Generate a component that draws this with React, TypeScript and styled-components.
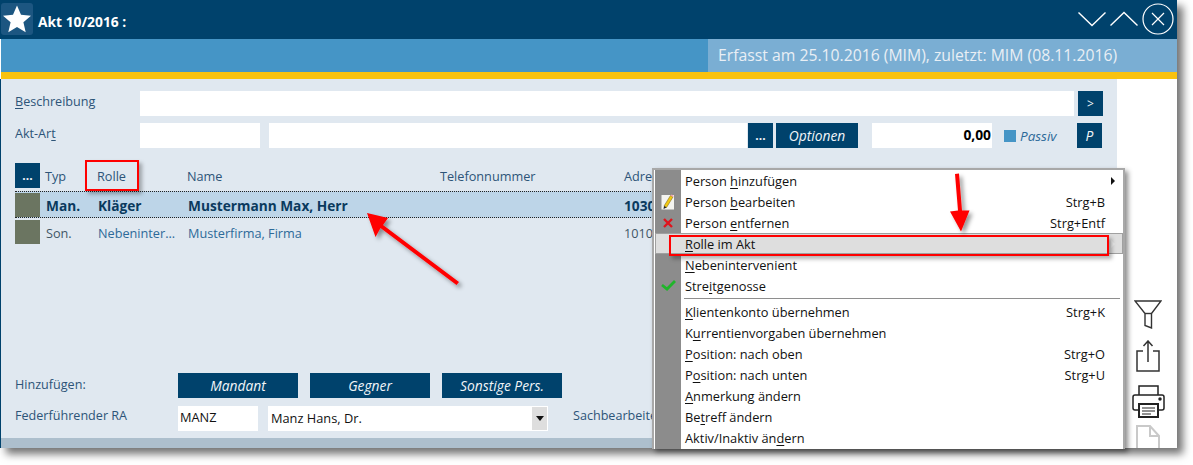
import React from "react";
import styled, { createGlobalStyle } from "styled-components";

const Global = createGlobalStyle`
  html, body { margin: 0; padding: 0; background: #fff; }
  body { font-family: "Open Sans", "Noto Sans", sans-serif; font-size: 13px; overflow: hidden; }
  u { text-underline-offset: 2px; text-decoration-thickness: 1px; }
`;

const Page = styled.div`
  position: relative;
  width: 1193px;
  height: 465px;
  overflow: hidden;
  background: #fff;
`;
const Win = styled.div`
  width: 1177px;
  height: 448px;
  display: flex;
  flex-direction: column;
  box-shadow: 6px 6px 8px rgba(0, 0, 0, 0.55);
  background: #fff;
`;
const TitleBar = styled.header`
  height: 39px;
  flex: none;
  background: #00426c;
  display: flex;
  align-items: center;
  padding: 0 3px 0 1px;
  color: #fff;
`;
const StarBox = styled.div`
  width: 32px;
  height: 32px;
  margin-top: -1px;
  border-radius: 3px;
  background: #1c5681;
  display: flex;
  align-items: center;
  justify-content: center;
`;
const Title = styled.div`
  margin-left: 5px;
  font-weight: 700;
  font-size: 13.8px;
  flex: 1;
  margin-top: 3px;
`;
const WinControls = styled.div`
  display: flex;
  align-items: center;
  gap: 4px;
  margin-top: -1px;
`;
const SubBar = styled.div`
  height: 33px;
  flex: none;
  background: #4595c6;
  margin-left: 1px;
  display: flex;
  justify-content: flex-end;
`;
const SubInfo = styled.div`
  width: 469px;
  box-sizing: border-box;
  padding: 0 0 0 10px;
  background: #7aaed3;
  color: #e9eff5;
  font-size: 15.75px;
  line-height: 33px;
  white-space: nowrap;
`;
const Stripe = styled.div`
  height: 7px;
  flex: none;
  margin-left: 1px;
  background: #f9c20f;
`;
const Body = styled.div`
  flex: 1;
  min-height: 0;
  display: flex;
`;
const Main = styled.main`
  width: 1117px;
  box-sizing: border-box;
  border-left: 1px solid #00426c;
  background: #e0e8f0;
  display: flex;
  flex-direction: column;
  overflow: hidden;
`;
const Side = styled.aside`
  flex: 1;
  position: relative;
  display: flex;
  flex-direction: column;
  align-items: center;
  padding: 221px 0 0 2px;
  overflow: hidden;
`;
const SideIcon = styled.div<{ $mt?: number }>`
  margin-top: ${(p) => p.$mt ?? 0}px;
  line-height: 0;
  flex: none;
`;
const Form = styled.section`
  padding: 12px 14px 0 14px;
  display: flex;
  flex-direction: column;
  gap: 7px;
`;
const FormRow = styled.div`
  display: flex;
  align-items: center;
  height: 25px;
`;
const Label = styled.label<{ $w?: number; $up?: number; $ml?: number }>`
  width: ${(p) => p.$w ?? 125}px;
  flex: none;
  color: #2d5478;
  font-size: 12.6px;
  margin-top: ${(p) => -(p.$up ?? 5)}px;
  margin-left: ${(p) => p.$ml ?? 0}px;
  white-space: nowrap;
  overflow: hidden;
`;
const Input = styled.div<{ $w?: number; $ml?: number; $right?: boolean }>`
  ${(p) => (p.$w ? `width:${p.$w}px; flex:none;` : "flex:1;")}
  margin-left: ${(p) => p.$ml ?? 0}px;
  height: 25px;
  box-sizing: border-box;
  background: #fff;
  padding: 0 1px 0 2px;
  line-height: 23px;
  font-size: 12.8px;
  color: #111;
  text-align: ${(p) => (p.$right ? "right" : "left")};
`;
const BoldVal = styled.b`
  font-size: 13.8px;
  color: #000;
`;
const Btn = styled.button<{ $w?: number; $ml?: number; $italic?: boolean }>`
  width: ${(p) => p.$w ?? 25}px;
  margin-left: ${(p) => p.$ml ?? 0}px;
  height: 25px;
  flex: none;
  border: 0;
  padding: 0;
  background: #00426c;
  color: #f1f5f8;
  font-family: inherit;
  font-size: ${(p) => (p.$italic ? 13.8 : 12)}px;
  font-style: ${(p) => (p.$italic ? "italic" : "normal")};
  line-height: 23px;
`;
const Swatch = styled.span`
  width: 12px;
  height: 12px;
  margin-left: 12px;
  background: #4595c6;
  flex: none;
`;
const PassivText = styled.span`
  width: 57px;
  margin-left: 4px;
  flex: none;
  color: #2d6a99;
  font-style: italic;
  font-size: 13.5px;
`;
const Table = styled.section`
  margin: 15px 14px 0 14px;
  display: flex;
  flex-direction: column;
`;
const HeadRow = styled.div`
  display: flex;
  align-items: center;
  height: 25px;
  color: #2d5478;
  font-size: 12.7px;
  margin-bottom: 3px;
`;
const DataRow = styled.div<{ $sel?: boolean }>`
  display: flex;
  align-items: center;
  height: ${(p) => (p.$sel ? 27 : 24)}px;
  box-sizing: border-box;
  margin-bottom: ${(p) => (p.$sel ? 2 : 0)}px;
  background: ${(p) => (p.$sel ? "#bdd5e8" : "transparent")};
  border-top: ${(p) => (p.$sel ? "1px dotted #222" : "0")};
  border-bottom: ${(p) => (p.$sel ? "1px dotted #222" : "0")};
  font-weight: ${(p) => (p.$sel ? 700 : 400)};
  font-size: ${(p) => (p.$sel ? 13.7 : 12.7)}px;
  color: ${(p) => (p.$sel ? "#0a3a5e" : "#2d6a99")};
`;
const Chip = styled.span`
  width: 25px;
  height: 24px;
  flex: none;
  background: #6b7561;
`;
const Cell = styled.span<{ $w: number; $dark?: boolean; $data?: boolean }>`
  width: ${(p) => p.$w}px;
  flex: none;
  font-size: inherit;
  white-space: nowrap;
  overflow: hidden;
  padding: ${(p) => (p.$data ? "1px 0 0 6px" : "1px 0 0 5px")};
  box-sizing: border-box;
  color: ${(p) => (p.$dark ? "#3f5666" : "inherit")};
`;
const Bottom = styled.section`
  margin-top: auto;
  padding: 0 14px;
  display: flex;
  flex-direction: column;
  gap: 8px;
`;
const Select = styled.div`
  width: 280px;
  height: 25px;
  margin-left: 10px;
  flex: none;
  background: #fff;
  display: flex;
  align-items: center;
  justify-content: space-between;
  padding-left: 3px;
  box-sizing: border-box;
  font-size: 12.8px;
  color: #111;
  line-height: 23px;
`;
const SelectArrow = styled.span`
  width: 15px;
  height: 23px;
  background: #dedede;
  margin-right: 1px;
  display: flex;
  align-items: center;
  justify-content: center;
  &::after {
    content: "";
    border-left: 4px solid transparent;
    border-right: 4px solid transparent;
    border-top: 5px solid #111;
  }
`;
const Footer = styled.div`
  height: 10px;
  margin-top: 7px;
  flex: none;
  background: #adbfcd;
`;
const Menu = styled.nav`
  position: absolute;
  left: 652px;
  top: 168px;
  width: 473px;
  height: 281px;
  box-sizing: border-box;
  background: #fff;
  border: 2px solid #a8a8a8;
  border-bottom: 0;
  padding-left: 1px;
  box-shadow: 3px 3px 5px rgba(0, 0, 0, 0.45);
  overflow: hidden;
`;
const MenuList = styled.div`
  display: flex;
  flex-direction: column;
  background: linear-gradient(to right, #8c8c8c 26px, #fff 26px);
  height: 100%;
`;
const Item = styled.div<{ $hover?: boolean }>`
  position: relative;
  height: 21px;
  flex: none;
  box-sizing: border-box;
  display: flex;
  align-items: center;
  font-size: 12.8px;
  color: #111;
  background: ${(p) => (p.$hover ? "#dedede" : "transparent")};
  outline: ${(p) => (p.$hover ? "1px solid #a0a0a0" : "0")};
  outline-offset: -1px;
  white-space: nowrap;
`;
const IconSlot = styled.span`
  width: 26px;
  flex: none;
  display: flex;
  align-items: center;
  justify-content: center;
`;
const ItemLabel = styled.span`
  flex: 1;
  margin-left: 4px;
`;
const Shortcut = styled.span`
  margin-right: 18px;
`;
const SubArrow = styled.span<{ $pale?: boolean }>`
  position: absolute;
  right: 8px;
  top: 7px;
  border-top: 4px solid transparent;
  border-bottom: 4px solid transparent;
  border-left: 4px solid ${(p) => (p.$pale ? "#eaeaea" : "#111")};
`;
const Sep = styled.div`
  height: 5px;
  flex: none;
  background: linear-gradient(#8e8e8e, #8e8e8e) 29px 2px / 436px 1px no-repeat;
`;
const Callout = styled.div<{ $x: number; $y: number; $w: number; $h: number }>`
  position: absolute;
  left: ${(p) => p.$x}px;
  top: ${(p) => p.$y}px;
  width: ${(p) => p.$w}px;
  height: ${(p) => p.$h}px;
  box-sizing: border-box;
  border: 2px solid #f00;
  box-shadow: 3px 3px 4px rgba(0, 0, 0, 0.3);
  pointer-events: none;
`;
const ArrowLayer = styled.svg`
  position: absolute;
  left: 0;
  top: 0;
  pointer-events: none;
`;

const Star = () => (
  <svg width="30" height="30" viewBox="0 0 30 30">
    <path d="M15 1.5l4 9.3 10 .9-7.6 6.6 2.3 9.9L15 22.9l-8.7 5.3 2.3-9.9L1 11.7l10-.9z" fill="#fff" />
  </svg>
);
const Chevron = ({ up }: { up?: boolean }) => (
  <svg width="28" height="16" viewBox="0 0 28 16" fill="none" stroke="#fff" strokeWidth="1.4">
    <path d={up ? "M0.5 14.5L14 1.5l13.5 13" : "M0.5 1.5L14 14.5 27.5 1.5"} />
  </svg>
);
const CloseIcon = () => (
  <svg width="32" height="32" viewBox="0 0 32 32" fill="none" stroke="#fff" strokeWidth="1.2">
    <circle cx="16" cy="16" r="15" />
    <path d="M10 10l12 12M22 10L10 22" />
  </svg>
);
const Pencil = () => (
  <svg width="14" height="16" viewBox="0 0 14 16">
    <rect x="0.5" y="1" width="12.5" height="14.5" fill="#f4f4f0" />
    <path d="M3 12L9.5 1.5l2.5 1.5L5.5 13.5z" fill="#f2c813" stroke="#6b5a10" strokeWidth="0.5" />
    <path d="M9.5 1.5l1-1 2.5 1.5-1 1z" fill="#f0a0b0" />
    <path d="M3 12l-.5 3 3-1.5z" fill="#222" />
  </svg>
);
const XIcon = () => (
  <svg width="10" height="10" viewBox="0 0 10 10" stroke="#e0141c" strokeWidth="2.4">
    <path d="M1 1l8 8M9 1l-8 8" />
  </svg>
);
const Check = () => (
  <svg width="15" height="11" viewBox="0 0 15 11" fill="none" stroke="#1fb52a" strokeWidth="2.8">
    <path d="M1 5l5 4 8-8" />
  </svg>
);
const Funnel = () => (
  <svg width="28" height="29" viewBox="0 0 28 29" fill="none" stroke="#333" strokeWidth="1.4">
    <path d="M1 1h26L17.5 13.5V28L11 25.5v-12z" />
    <path d="M11 13.5h6.5" />
  </svg>
);
const ShareIcon = () => (
  <svg width="24" height="32" viewBox="0 0 24 32" fill="none" stroke="#333" strokeWidth="1.5">
    <path d="M7 11H1v20h22V11h-6" />
    <path d="M12 22V1M7.5 6L12 1l4.5 5" />
  </svg>
);
const Printer = () => (
  <svg width="33" height="33" viewBox="0 0 33 33" fill="none" stroke="#222" strokeWidth="1.5">
    <path d="M7 10V1h19v9" />
    <path d="M7 25H3a2 2 0 0 1-2-2V12a2 2 0 0 1 2-2h27a2 2 0 0 1 2 2v11a2 2 0 0 1-2 2h-4" />
    <path d="M7 19h19v13H7z" strokeWidth="2" />
    <path d="M10 23h13M10 26h13M10 29h9" strokeWidth="1" />
    <circle cx="28" cy="14" r="1" fill="#222" />
  </svg>
);
const DocIcon = () => (
  <svg width="24" height="26" viewBox="0 0 24 26" fill="none" stroke="#c9c9c9" strokeWidth="2">
    <path d="M1 25V1h13l9 10v14" />
    <path d="M14 1v10h9" />
  </svg>
);

const menuTop = [
  { l: <>Person <u>h</u>inzufügen</>, sub: true },
  { l: <>Person <u>b</u>earbeiten</>, s: "Strg+B", i: <Pencil /> },
  { l: <>Person <u>e</u>ntfernen</>, s: "Strg+Entf", i: <XIcon /> },
  { l: <><u>R</u>olle im Akt</>, hover: true },
  { l: <><u>N</u>ebenintervenient</> },
  { l: <>Stre<u>i</u>tgenosse</>, i: <Check /> },
];
const menuRest = [
  { l: <><u>K</u>lientenkonto übernehmen</>, s: "Strg+K" },
  { l: <>K<u>u</u>rrentienvorgaben übernehmen</> },
  { l: <><u>P</u>osition: nach oben</>, s: "Strg+O" },
  { l: <>P<u>o</u>sition: nach unten</>, s: "Strg+U" },
  { l: <><u>A</u>nmerkung ändern</> },
  { l: <>Be<u>t</u>reff ändern</> },
  { l: <>Aktiv/Inaktiv än<u>d</u>ern</> },
];

type MI = { l: React.ReactNode; s?: string; i?: React.ReactNode; sub?: boolean; hover?: boolean };
const MenuItem = ({ l, s, i, sub, hover }: MI) => (
  <Item $hover={hover}>
    <IconSlot>{i}</IconSlot>
    <ItemLabel>{l}</ItemLabel>
    {s && <Shortcut>{s}</Shortcut>}
    {sub && <SubArrow />}
    {hover && <SubArrow $pale />}
  </Item>
);

export default function App() {
  return (
    <Page>
      <Global />
      <Win>
        <TitleBar>
          <StarBox><Star /></StarBox>
          <Title>Akt 10/2016 :</Title>
          <WinControls>
            <Chevron />
            <Chevron up />
            <CloseIcon />
          </WinControls>
        </TitleBar>
        <SubBar>
          <SubInfo>Erfasst am 25.10.2016 (MIM), zuletzt: MIM (08.11.2016)</SubInfo>
        </SubBar>
        <Stripe />
        <Body>
          <Main>
            <Form>
              <FormRow>
                <Label><u>B</u>eschreibung</Label>
                <Input />
                <Btn $ml={4}>&gt;</Btn>
              </FormRow>
              <FormRow>
                <Label>Akt-Ar<u>t</u></Label>
                <Input $w={120} />
                <Input $w={478} $ml={9} />
                <Btn $ml={1}><b>...</b></Btn>
                <Btn $w={82} $ml={3} $italic>Optionen</Btn>
                <Input $w={120} $ml={14} $right><BoldVal>0,00</BoldVal></Input>
                <Swatch />
                <PassivText>Passiv</PassivText>
                <Btn $italic>P</Btn>
              </FormRow>
            </Form>
            <Table>
              <HeadRow>
                <Btn><b>...</b></Btn>
                <Cell $w={52}>Typ</Cell>
                <Cell $w={90}>Rolle</Cell>
                <Cell $w={253}>Name</Cell>
                <Cell $w={184}>Telefonnummer</Cell>
                <Cell $w={33}>Adresse</Cell>
              </HeadRow>
              <DataRow $sel>
                <Chip />
                <Cell $w={52} $data>Man.</Cell>
                <Cell $w={90} $data>Kläger</Cell>
                <Cell $w={253} $data>Mustermann Max, Herr</Cell>
                <Cell $w={184} />
                <Cell $w={33}>1030</Cell>
              </DataRow>
              <DataRow>
                <Chip />
                <Cell $w={52} $dark $data>Son.</Cell>
                <Cell $w={90} $data>Nebeninter...</Cell>
                <Cell $w={253} $data>Musterfirma, Firma</Cell>
                <Cell $w={184} />
                <Cell $w={33} $dark>1010</Cell>
              </DataRow>
            </Table>
            <Bottom>
              <FormRow>
                <Label $w={163} $up={3}>Hinzufügen:</Label>
                <Btn $w={120} $italic>Mandant</Btn>
                <Btn $w={120} $ml={12} $italic>Gegner</Btn>
                <Btn $w={120} $ml={12} $italic>Sonstige Pers.</Btn>
              </FormRow>
              <FormRow>
                <Label $w={163} $up={7}>Federführender RA</Label>
                <Input $w={80}>MANZ</Input>
                <Select>
                  Manz Hans, Dr.
                  <SelectArrow />
                </Select>
                <Label $w={79} $up={7} $ml={25}>Sachbearbeiter</Label>
              </FormRow>
            </Bottom>
            <Footer />
          </Main>
          <Side>
            <SideIcon><Funnel /></SideIcon>
            <SideIcon $mt={11}><ShareIcon /></SideIcon>
            <SideIcon $mt={13}><Printer /></SideIcon>
            <SideIcon $mt={7}><DocIcon /></SideIcon>
          </Side>
        </Body>
      </Win>

      <Callout $x={85} $y={160} $w={54} $h={31} />
      <Menu>
        <MenuList>
          {menuTop.map((m, i) => <MenuItem key={i} {...m} />)}
          <Sep />
          {menuRest.map((m, i) => <MenuItem key={i} {...m} />)}
        </MenuList>
      </Menu>
      <Callout $x={669} $y={235} $w={440} $h={21} />
      <ArrowLayer width="1193" height="465" viewBox="0 0 1193 465">
        <defs>
          <filter id="sh" x="-30%" y="-30%" width="160%" height="160%">
            <feDropShadow dx="3" dy="3" stdDeviation="2" floodColor="#000" floodOpacity="0.4" />
          </filter>
        </defs>
        <g fill="#f00" filter="url(#sh)">
          <path d="M367 213l21 5-5 7 76 57-2.5 3-76-57-5 9z" />
          <path d="M955 174l4-.5 3 37h7.5l-8.5 21-11-20 8-1z" />
        </g>
      </ArrowLayer>
    </Page>
  );
}
